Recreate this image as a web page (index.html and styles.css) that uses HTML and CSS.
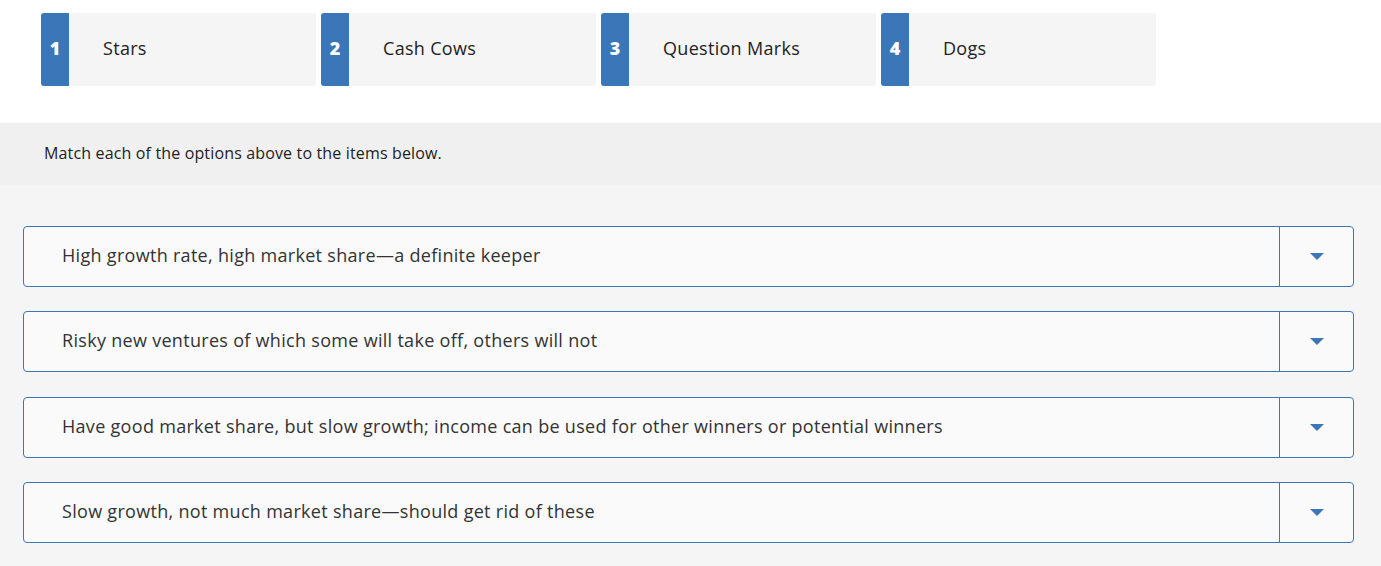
FILE: index.html
```html
<!DOCTYPE html>
<html>
<head>
<meta charset="utf-8">
<link rel="stylesheet" href="styles.css">
</head>
<body>
<div class="options">
  <div class="option"><div class="num">1</div><div class="label">Stars</div></div>
  <div class="option"><div class="num">2</div><div class="label">Cash Cows</div></div>
  <div class="option"><div class="num">3</div><div class="label">Question Marks</div></div>
  <div class="option"><div class="num">4</div><div class="label">Dogs</div></div>
</div>
<div class="instructions">Match each of the options above to the items below.</div>
<div class="items">
  <div class="item"><div class="item-text">High growth rate, high market share—a definite keeper</div><div class="select"><span class="caret"></span></div></div>
  <div class="item"><div class="item-text">Risky new ventures of which some will take off, others will not</div><div class="select"><span class="caret"></span></div></div>
  <div class="item"><div class="item-text">Have good market share, but slow growth; income can be used for other winners or potential winners</div><div class="select"><span class="caret"></span></div></div>
  <div class="item"><div class="item-text">Slow growth, not much market share—should get rid of these</div><div class="select"><span class="caret"></span></div></div>
</div>
</body>
</html>
```
FILE: styles.css
```css
html, body {
  margin: 0;
  padding: 0;
  background: #ffffff;
  font-family: "Open Sans", Lato, Arial, sans-serif;
  color: #333333;
}
.options {
  display: flex;
  gap: 5px;
  padding: 13px 0 0 41px;
  height: 73px;
}
.option {
  width: 275px;
  height: 73px;
  display: flex;
  align-items: center;
  background: #f5f5f5;
  border-radius: 3px;
  overflow: hidden;
}
.num {
  width: 28px;
  height: 100%;
  box-sizing: border-box;
  padding-bottom: 3px;
  background: #3a76b8;
  color: #ffffff;
  font-weight: 800;
  font-size: 18px;
  display: flex;
  align-items: center;
  justify-content: center;
}
.label {
  margin-left: 34px;
  padding-bottom: 3px;
  font-size: 18px;
  letter-spacing: 0.3px;
  color: #222222;
}
.instructions {
  margin-top: 37px;
  height: 62px;
  box-sizing: border-box;
  padding-bottom: 2px;
  background: #f0f0f0;
  display: flex;
  align-items: center;
  padding-left: 44px;
  font-size: 16px;
  letter-spacing: 0.15px;
  color: #222222;
}
.items {
  background: #f5f5f5;
  padding: 41px 27px 24px 23px;
  display: flex;
  flex-direction: column;
  gap: 24.4px;
  min-height: 320px;
}
.item {
  display: flex;
  height: 61px;
  flex-shrink: 0;
  box-sizing: border-box;
  border: 1px solid #3a76b8;
  border-radius: 4px;
  background: #fafafa;
}
.item-text {
  flex: 1;
  display: flex;
  align-items: center;
  padding-left: 38px;
  padding-bottom: 3px;
  font-size: 18px;
  letter-spacing: 0.3px;
  color: #333333;
}
.select {
  width: 73px;
  border-left: 1px solid #3a76b8;
  display: flex;
  align-items: center;
  justify-content: center;
}
.caret {
  width: 0;
  height: 0;
  border-left: 7px solid transparent;
  border-right: 7px solid transparent;
  border-top: 7px solid #3a76b8;
}
```
